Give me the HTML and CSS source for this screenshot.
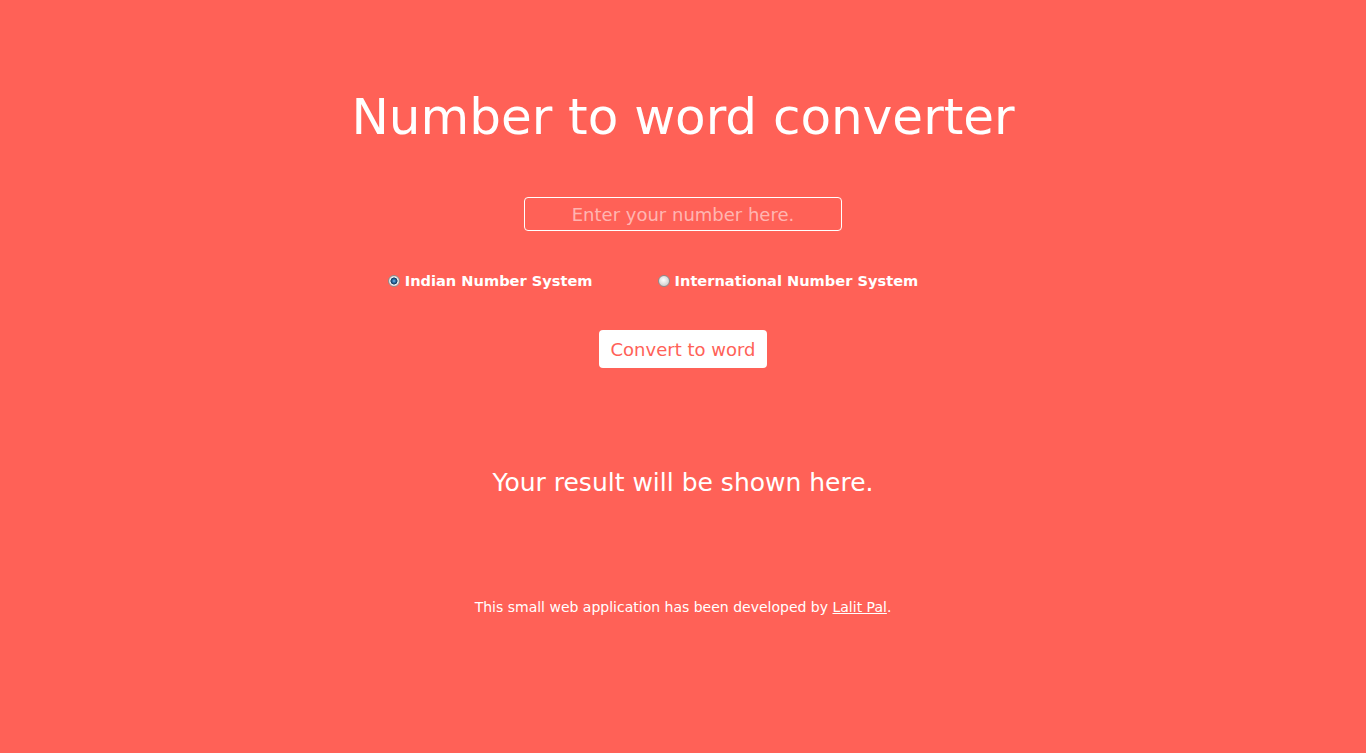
FILE: index.html
```html
<!DOCTYPE html>
<html lang="en">
<head>
<meta charset="utf-8">
<title>Number to word converter</title>
<link rel="stylesheet" href="styles.css">
</head>
<body>
<main class="page">
  <h1 class="title">Number to word converter</h1>
  <input class="number-input" type="text" placeholder="Enter your number here.">
  <div class="systems">
    <label class="system"><input class="radio" type="radio" name="sys" checked><span>Indian Number System</span></label>
    <label class="system"><input class="radio" type="radio" name="sys"><span>International Number System</span></label>
  </div>
  <button class="convert" type="button">Convert to word</button>
  <p class="result">Your result will be shown here.</p>
  <p class="credit">This small web application has been developed by <a class="credit-link" href="#">Lalit Pal</a>.</p>
</main>
</body>
</html>
```

FILE: styles.css
```css
html, body {
  margin: 0;
  padding: 0;
  height: 100%;
}
body {
  background: #ff6157;
  color: #ffffff;
  font-family: "DejaVu Sans", "Liberation Sans", sans-serif;
}
.page {
  display: flex;
  flex-direction: column;
  align-items: center;
}
.title {
  margin: 87px 0 0;
  font-size: 50px;
  line-height: 60px;
  font-weight: 400;
}
.number-input {
  margin-top: 50px;
  box-sizing: border-box;
  width: 318px;
  height: 34px;
  border: 1px solid #ffffff;
  border-radius: 4px;
  background: transparent;
  color: #ffffff;
  text-align: center;
  font-family: inherit;
  font-size: 18px;
  padding: 0 8px;
  outline: none;
}
.number-input::placeholder {
  color: rgba(255, 255, 255, 0.55);
}
.systems {
  margin-top: 40px;
  display: flex;
  gap: 65px;
  padding-right: 60px;
  line-height: 20px;
}
.system {
  display: flex;
  align-items: center;
  gap: 5px;
  font-weight: 700;
  font-size: 14.6px;
}
.radio {
  appearance: none;
  -webkit-appearance: none;
  margin: 0;
  width: 12px;
  height: 12px;
  border-radius: 50%;
  border: 1px solid #8c8c8c;
  box-sizing: border-box;
  background: radial-gradient(circle at 45% 40%, #ffffff 0, #e6e6e6 40%, #bdbdbd 100%);
}
.radio:checked {
  background: radial-gradient(circle at 50% 50%, #7fb8e6 0, #2f74ad 1.5px, #123a5e 3.2px, #e9e9e9 3.8px, #cfcfcf 100%);
}
.convert {
  margin-top: 39px;
  width: 168px;
  height: 38px;
  border: none;
  border-radius: 4px;
  background: #ffffff;
  color: #ff6157;
  font-family: inherit;
  font-size: 18px;
  padding: 0;
  cursor: pointer;
}
.result {
  margin: 100px 0 0;
  font-size: 25px;
  line-height: 30px;
}
.credit {
  margin: 100px 0 0;
  font-size: 14px;
  line-height: 18px;
}
.credit-link {
  color: #ffffff;
}
```
